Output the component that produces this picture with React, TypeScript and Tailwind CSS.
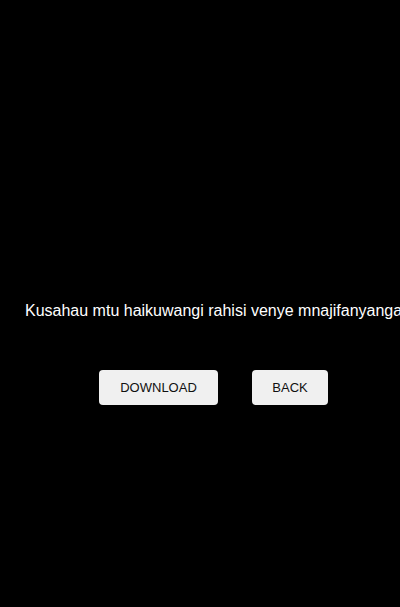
import React from 'react';

export default function App() {
  return (
    <main
      className="w-[400px] h-[607px] bg-black overflow-hidden pt-[299px] pl-[25px]"
      style={{ fontFamily: '"Liberation Sans", Arial, sans-serif' }}
    >
      <p className="h-6 leading-6 text-[16px] text-white whitespace-nowrap">
        Kusahau mtu haikuwangi rahisi venye mnajifanyanga hamjali
      </p>

      <div className="flex gap-[34px] mt-[47px] ml-[74px]">
        <button
          type="button"
          className="w-[119px] h-[35px] rounded-[4px] bg-[#f0f0f0] text-[13px] text-[#111] uppercase"
        >
          Download
        </button>
        <button
          type="button"
          className="w-[76px] h-[35px] rounded-[4px] bg-[#f0f0f0] text-[13px] text-[#111] uppercase"
        >
          Back
        </button>
      </div>
    </main>
  );
}
